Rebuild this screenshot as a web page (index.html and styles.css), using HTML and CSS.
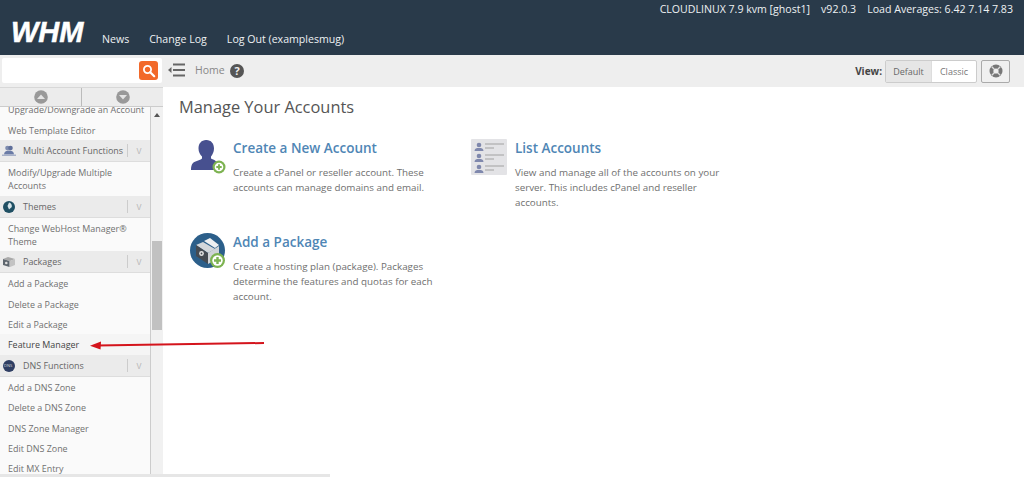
FILE: index.html
```html
<!DOCTYPE html>
<html lang="en">
<head>
<meta charset="utf-8">
<title>WHM</title>
<link rel="stylesheet" href="styles.css">
</head>
<body>
<header class="top">
  <div class="logo">WHM</div>
  <nav class="nav"><a>News</a><a>Change Log</a><a>Log Out (examplesmug)</a></nav>
  <div class="sys"><span>CLOUDLINUX 7.9 kvm [ghost1]</span><span>v92.0.3</span><span>Load Averages: 6.42 7.14 7.83</span></div>
</header>
<div class="main">
  <aside class="side">
    <div class="search">
      <div class="search-box">
        <span class="search-btn"><svg width="14" height="14" viewBox="0 0 14 14"><circle cx="5.500" cy="5.500" r="3.600" fill="none" stroke="#fff" stroke-width="1.800"/><path d="M8.200 8.200l4 4" stroke="#fff" stroke-width="2.200" stroke-linecap="round"/></svg></span>
      </div>
    </div>
    <div class="arrows">
      <div class="arrow-cell"><svg width="14" height="14" viewBox="0 0 14 14"><circle cx="7" cy="7" r="6.800" fill="#999"/><path d="M3 9l4-4.400L11 9z" fill="#e4e4e4"/></svg></div>
      <div class="arrow-cell"><svg width="14" height="14" viewBox="0 0 14 14"><circle cx="7" cy="7" r="6.800" fill="#999"/><path d="M3 5l4 4.400L11 5z" fill="#e4e4e4"/></svg></div>
    </div>
    <div class="side-body">
      <ul class="menu">
        <li class="item clipped"><span>Upgrade/Downgrade an Account</span></li>
        <li class="item">Web Template Editor</li>
        <li class="group"><span class="gicon"><svg width="14" height="12" viewBox="0 0 14 12"><circle cx="5.500" cy="3" r="2.300" fill="#7f8db0"/><circle cx="8.500" cy="3" r="2.300" fill="#5f6f9a"/><path d="M2 9.500c0-2.800 2-4 5-4s5 1.200 5 4z" fill="#6a7ba6"/><rect y="9.500" width="14" height="1.500" fill="#a6b0c8"/></svg></span><span class="gname">Multi Account Functions</span><span class="chev">v</span></li>
        <li class="item wrap first-wrap">Modify/Upgrade Multiple Accounts</li>
        <li class="group"><span class="gicon"><svg width="14" height="14" viewBox="0 0 14 14"><circle cx="7" cy="7" r="6" fill="#1f4f63"/><path d="M7 2.500c2 .5 3 2 2.800 4.500L7 9.500 5.500 6z" fill="#d7e5ea"/></svg></span><span class="gname">Themes</span><span class="chev">v</span></li>
        <li class="item wrap">Change WebHost Manager® Theme</li>
        <li class="group"><span class="gicon"><svg width="14" height="14" viewBox="0 0 14 14"><path d="M1 4l5-2 7 2-5 2z" fill="#a9a9a9"/><path d="M1 4l6.500 2v6L1 10z" fill="#5e666e"/><path d="M13 4L8 6v6l5-2z" fill="#c3c3c3"/><circle cx="4.300" cy="8" r="1.300" fill="#ddd"/></svg></span><span class="gname">Packages</span><span class="chev">v</span></li>
        <li class="item">Add a Package</li>
        <li class="item">Delete a Package</li>
        <li class="item">Edit a Package</li>
        <li class="item strong">Feature Manager</li>
        <li class="group"><span class="gicon"><svg width="14" height="14" viewBox="0 0 14 14"><circle cx="7" cy="7" r="6" fill="#2f3e63"/></svg><span class="dns">DNS</span></span><span class="gname">DNS Functions</span><span class="chev">v</span></li>
        <li class="item">Add a DNS Zone</li>
        <li class="item">Delete a DNS Zone</li>
        <li class="item">DNS Zone Manager</li>
        <li class="item">Edit DNS Zone</li>
        <li class="item">Edit MX Entry</li>
      </ul>
      <div class="scroll">
        <svg class="scroll-up" width="6" height="4" viewBox="0 0 6 4"><path d="M0 4l3-4 3 4z" fill="#555"/></svg>
        <div class="thumb"></div>
      </div>
    </div>
  </aside>
  <div class="right">
    <div class="bar">
      <svg class="collapse" width="17" height="14" viewBox="0 0 17 14"><path d="M5 1.500h12M5 7h12M5 12.500h12" stroke="#666" stroke-width="2"/><path d="M0 7l3.500-3v6z" fill="#666"/></svg>
      <span class="crumb">Home</span>
      <svg class="help" width="14" height="14" viewBox="0 0 14 14"><circle cx="7" cy="7" r="7" fill="#555"/><text x="7" y="11" text-anchor="middle" class="help-q">?</text></svg>
      <div class="view">
        <b class="view-label">View:</b>
        <div class="seg"><span class="seg-on">Default</span><span class="seg-off">Classic</span></div>
        <span class="close"><svg width="14" height="14" viewBox="0 0 14 14"><circle cx="7" cy="7" r="6.500" fill="#777"/><circle cx="7" cy="7" r="2.600" fill="#eee"/><path d="M2.800 2.800l2.500 2.500M11.200 2.800L8.700 5.300M2.800 11.200l2.500-2.500M11.200 11.200L8.700 8.700" stroke="#ddd" stroke-width="1.300"/></svg></span>
      </div>
    </div>
    <main class="content">
      <h1 class="title">Manage Your Accounts</h1>
      <div class="cards">
        <section class="card">
          <svg class="cicon" width="36" height="36" viewBox="0 0 36 36"><path d="M16.500 1c4.500 0 7.500 3.500 7.500 8.500 0 3.500-1.500 6-3 8v2c2 1 4 1.500 5 3v8.500H1c0-3 .5-5.500 2-7 2-2 7-2.500 9-4.500v-2c-2-2-3.500-4.500-3.500-8 0-5 3-8.500 7.500-8.500z" fill="#47508f"/><circle cx="29" cy="28" r="6.500" fill="#7db351"/><circle cx="29" cy="28" r="4.300" fill="#fff"/><path d="M29 25.300v5.400M26.300 28h5.400" stroke="#7db351" stroke-width="1.900"/></svg>
          <div class="ctext"><h2 class="ctitle">Create a New Account</h2><p class="cdesc">Create a cPanel or reseller account. These accounts can manage domains and email.</p></div>
        </section>
        <section class="card card-list">
          <svg class="cicon" width="36" height="36" viewBox="0 0 36 36"><rect width="36" height="36" rx="1" fill="#e3e3e6"/><g fill="#7f88ad"><circle cx="8" cy="6" r="2.300"/><path d="M3.500 12c0-2.500 2-3 4.500-3s4.500.5 4.500 3z"/><circle cx="8" cy="17" r="2.300"/><path d="M3.500 23c0-2.500 2-3 4.500-3s4.500.5 4.500 3z"/><circle cx="8" cy="28" r="2.300"/><path d="M3.500 34c0-2.500 2-3 4.500-3s4.500.5 4.500 3z"/></g><path d="M14 5h19M14 9h9M14 16h19M14 20h9M14 27h19M14 31h9" stroke="#9a9a9a" stroke-width=".9"/></svg>
          <div class="ctext"><h2 class="ctitle">List Accounts</h2><p class="cdesc">View and manage all of the accounts on your server. This includes cPanel and reseller accounts.</p></div>
        </section>
        <section class="card">
          <svg class="cicon" width="36" height="36" viewBox="0 0 36 36"><circle cx="17.500" cy="17.500" r="17.500" fill="#2c5f8a"/><path d="M6 12l7-3 12 7-7 4z" fill="#d3d7db"/><path d="M14 8l6-3 9 7-4 3z" fill="#eef0f2"/><path d="M6 12l12 8v11l-12-8z" fill="#454b52"/><path d="M18 20l11-7v12l-11 6z" fill="#cfd3d7"/><circle cx="11.500" cy="20.500" r="2.400" fill="#e4e4e4"/><circle cx="11.500" cy="20.500" r=".9" fill="#454b52"/><circle cx="27.500" cy="27.500" r="7.500" fill="#7db351"/><circle cx="27.500" cy="27.500" r="5.200" fill="#fff"/><path d="M27.500 24v7M24 27.500h7" stroke="#7db351" stroke-width="2.400"/></svg>
          <div class="ctext"><h2 class="ctitle">Add a Package</h2><p class="cdesc">Create a hosting plan (package). Packages determine the features and quotas for each account.</p></div>
        </section>
      </div>
    </main>
  </div>
</div>
<svg class="pointer" width="180" height="12" viewBox="0 0 180 12"><path d="M177 3L10 5.500" stroke="#d4141c" stroke-width="2" fill="none"/><path d="M3 5.800L14 1.500 13.500 9.500z" fill="#d4141c"/></svg>
<div class="hscroll"></div>
</body>
</html>
```
FILE: styles.css
```css
* { box-sizing: border-box; }
html, body { margin: 0; height: 477px; overflow: hidden; }
body { font-family: "Open Sans", "Liberation Sans", sans-serif; background: #fff; color: #666; position: relative; display: flex; flex-direction: column; }

.top { height: 55px; flex: none; background: #293a4a; color: #eef1f3; display: flex; align-items: flex-start; }
.logo { margin: 16px 0 0 11px; width: 79px; font: italic 700 29px/32px "Liberation Sans", sans-serif; color: #fff; -webkit-text-stroke: 0.5px #fff; }
.nav { display: flex; gap: 20px; margin: 31px 0 0 12px; font-size: 10.600px; line-height: 16px; }
.sys { margin: 1px 11px 0 auto; display: flex; gap: 11px; font-size: 10.600px; line-height: 16px; white-space: nowrap; }

.main { flex: 1; display: flex; min-height: 0; }
.side { width: 163px; flex: none; display: flex; flex-direction: column; background: #eee; }
.search { height: 32px; padding: 3px 0 0 2px; flex: none; }
.search-box { width: 160px; height: 25px; background: #fff; border-radius: 2px; display: flex; justify-content: flex-end; align-items: center; padding-right: 4px; }
.search-btn { width: 19px; height: 19px; border-radius: 3px; background: #f2692a; display: flex; align-items: center; justify-content: center; }
.arrows { height: 20px; flex: none; display: flex; border-top: 1px solid #d8d8d8; border-bottom: 1px solid #ccc; background: #ececec; }
.arrow-cell { flex: 1; display: flex; align-items: center; justify-content: center; }
.arrow-cell:first-child { flex: none; width: 82px; border-right: 1px solid #bbb; }

.side-body { flex: 1; min-height: 0; display: flex; }
.menu { list-style: none; margin: 0; padding: 0; width: 151px; flex: none; background: #fafafa; border-right: 1px solid #ccc; overflow: hidden; font-size: 8.950px; color: #707070; }
.item { height: 20.300px; line-height: 22px; padding-left: 8px; white-space: nowrap; }
.item.clipped { height: 13px; line-height: 6px; overflow: hidden; }
.item.clipped span { display: block; }
.item.wrap { height: 33px; white-space: normal; line-height: 12.800px; padding: 4.500px 8px 0; }
.item.first-wrap { height: 34px; }
.item.strong { color: #444; background: #f5f5f5; height: 21px; }
.group { height: 22px; background: #ebebeb; border-bottom: 1px solid #ddd; display: flex; align-items: center; color: #666; }
.gicon { width: 23px; padding-left: 2px; display: flex; align-items: center; position: relative; flex: none; }
.dns { position: absolute; left: 4px; top: 4px; font-size: 4px; line-height: 6px; color: #ddd; }
.gname { flex: 1; white-space: nowrap; }
.chev { width: 23px; height: 13px; flex: none; border-left: 1px solid #ccc; text-align: center; color: #bbb; font-size: 10px; line-height: 12px; }

.scroll { width: 12px; flex: none; background: #f1f1f1; padding: 0 1px; }
.scroll-up { display: block; margin: 6px auto 0; }
.thumb { width: 10px; height: 89px; margin-top: 124px; background: #c1c1c1; }

.right { flex: 1; min-width: 0; display: flex; flex-direction: column; }
.bar { height: 32px; flex: none; background: #eee; display: flex; align-items: center; padding: 0 14px 0 5px; }
.collapse { flex: none; margin-bottom: 2px; }
.crumb { font-size: 10.500px; color: #888; margin: 0 0 2px 10px; }
.help { margin-left: 5px; flex: none; }
.help-q { font: 700 11px "Open Sans", sans-serif; fill: #eee; }
.view { margin-left: auto; display: flex; align-items: center; }
.view-label { font-size: 10px; color: #444; margin-right: 3px; }
.seg { display: flex; height: 23px; border: 1px solid #ccc; border-radius: 2px; font-size: 9px; line-height: 21px; background: #fff; }
.seg-on { width: 46px; text-align: center; background: #e6e6e6; border-right: 1px solid #ddd; color: #666; }
.seg-off { width: 44px; text-align: center; color: #777; }
.close { width: 29px; height: 23px; margin-left: 4px; border: 1px solid #aaa; border-radius: 2px; background: #f0f0f0; display: flex; align-items: center; justify-content: center; }

.content { padding: 0 16px; flex: 1; }
.title { margin: 9px 0 0; font-size: 16.400px; line-height: 22px; font-weight: 400; color: #555; }
.cards { display: grid; grid-template-columns: 281px 270px; grid-template-rows: 94px auto; margin: 21px 0 0 11px; }
.card { display: flex; align-items: flex-start; gap: 7px; }
.card-list { gap: 8px; }
.cicon { flex: none; }
.ctext { width: 210px; }
.ctitle { margin: 0; font-size: 13.500px; line-height: 18px; font-weight: 600; color: #4f86b5; }
.cdesc { margin: 7.500px 0 0; font-size: 9.800px; line-height: 15.200px; color: #6f6f6f; }

.pointer { position: absolute; left: 87px; top: 340px; }
.hscroll { position: absolute; left: 0; bottom: 0; width: 330px; height: 3px; background: #e6e6e6; }
```
